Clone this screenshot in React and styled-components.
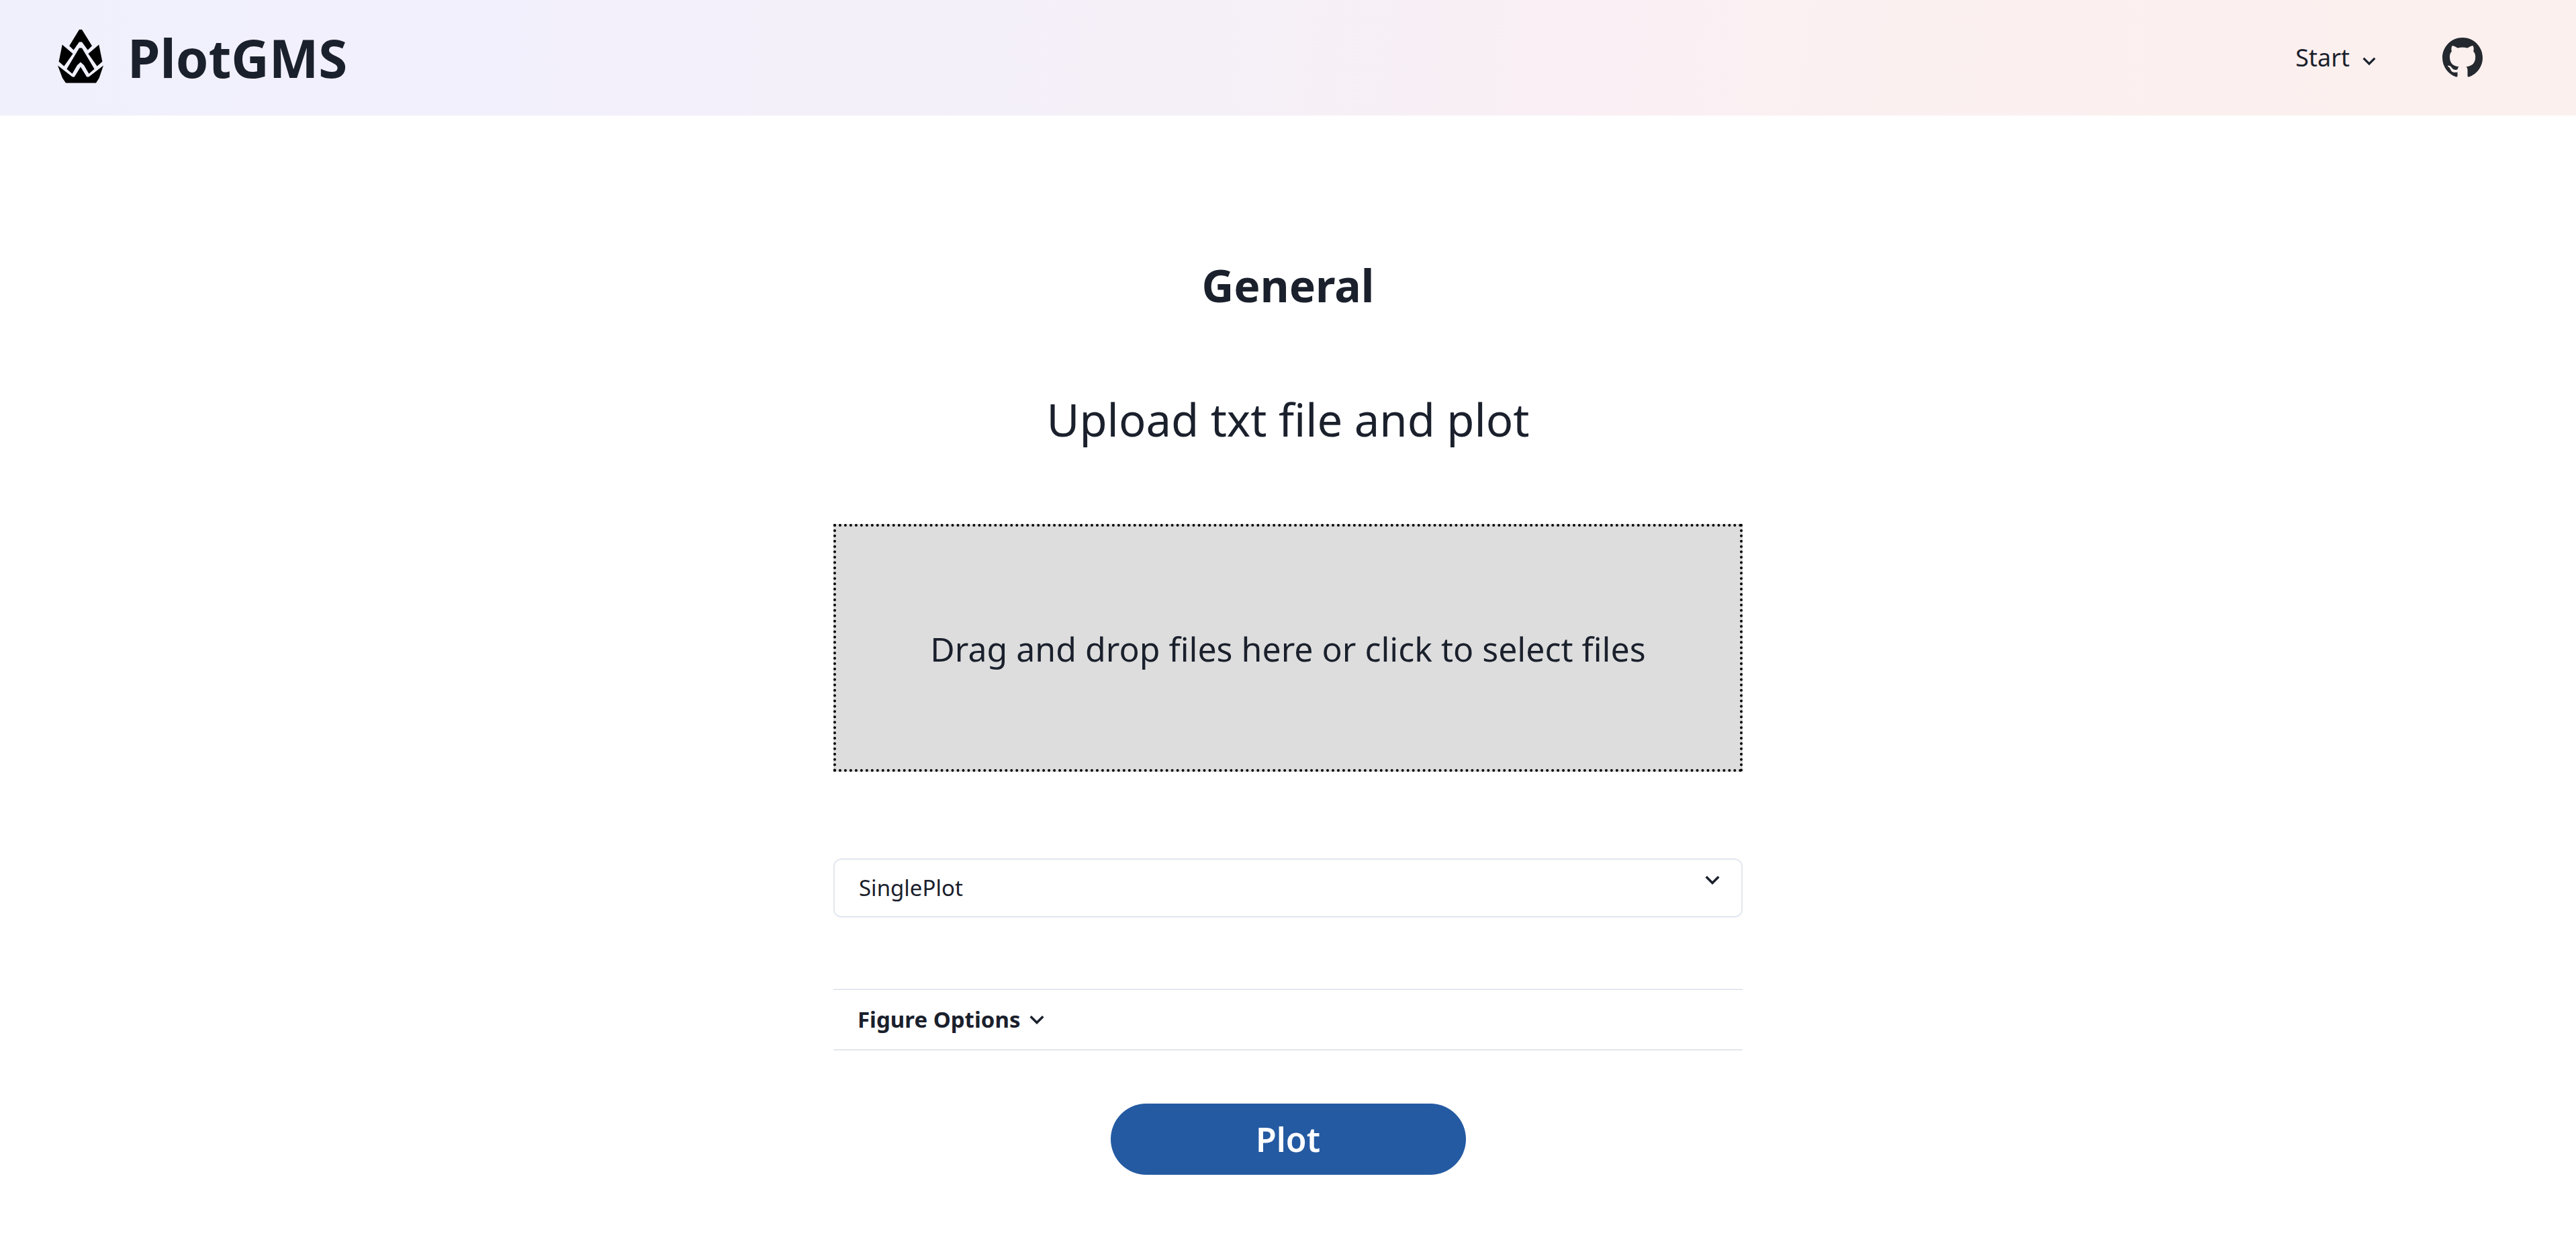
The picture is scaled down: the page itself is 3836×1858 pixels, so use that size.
import React from "react";
import styled, { createGlobalStyle } from "styled-components";
import { BsGithub } from "react-icons/bs";

const GlobalStyle = createGlobalStyle`
  *, *::before, *::after { box-sizing: border-box; }
  body {
    margin: 0;
    background: #ffffff;
    color: #1a202c;
    font-family: "Noto Sans", "Open Sans", sans-serif;
  }
  button, select, input { font: inherit; color: inherit; }
`;

const Header = styled.header`
  display: flex;
  align-items: center;
  justify-content: space-between;
  height: 172px;
  padding: 0 139px 0 86px;
  background: linear-gradient(95deg, #f0f0fd 0%, #f3f0fb 28%, #f6f0f7 50%, #faeff4 62%, #fbf0f0 74%, #fcf0ee 100%);
`;

const Brand = styled.a`
  display: flex;
  align-items: center;
  gap: 36px;
  color: inherit;
  font-size: 78px;
  font-weight: 700;
  line-height: 96px;
  text-decoration: none;
`;

const LogoMark = styled.svg`
  width: 68px;
  height: 84px;
  fill: #000000;
`;

const Nav = styled.nav`
  display: flex;
  align-items: center;
  gap: 90px;
`;

const MenuButton = styled.button`
  display: flex;
  align-items: flex-end;
  gap: 10px;
  padding: 0;
  border: 0;
  background: none;
  font-size: 36px;
  line-height: 48px;
  cursor: pointer;
`;

const GithubLink = styled.a`
  display: flex;
  color: #24292f;
  font-size: 60px;
`;

const ChevronIcon = styled.svg`
  flex: none;
  width: ${({ $size }) => $size}px;
  height: ${({ $size }) => $size}px;
  fill: currentColor;
`;

const Main = styled.main`
  display: flex;
  flex-direction: column;
  align-items: center;
  width: 100%;
  max-width: 1354px;
  margin: 0 auto;
  padding: 212px 0 108px;
`;

const Title = styled.h1`
  margin: 0;
  font-size: 66px;
  font-weight: 700;
  line-height: 80px;
`;

const Subtitle = styled.p`
  margin: 120px 0 0;
  font-size: 67px;
  line-height: 80px;
`;

const DropZone = styled.label`
  display: flex;
  align-items: center;
  justify-content: center;
  width: 100%;
  height: 369px;
  margin-top: 116px;
  padding-top: 2px;
  border: 4px dotted #000000;
  background: #dddddd;
  font-size: 50px;
  line-height: 60px;
  cursor: pointer;
`;

const HiddenFileInput = styled.input`
  position: absolute;
  width: 1px;
  height: 1px;
  opacity: 0;
`;

const SelectField = styled.div`
  position: relative;
  width: 100%;
  margin-top: 129px;
`;

const Select = styled.select`
  display: block;
  width: 100%;
  height: 88px;
  padding: 0 80px 0 36px;
  border: 2px solid #e2e8f0;
  border-radius: 12px;
  appearance: none;
  background: #ffffff;
  font-size: 33px;
  line-height: 48px;
`;

const SelectChevron = styled.span`
  position: absolute;
  top: 11px;
  right: 24px;
  display: flex;
  pointer-events: none;
`;

const Accordion = styled.section`
  width: 100%;
  margin-top: 106px;
  border-top: 2px solid #e2e8f0;
  border-bottom: 2px solid #e2e8f0;
`;

const AccordionButton = styled.button`
  display: flex;
  align-items: center;
  gap: 4px;
  width: 100%;
  height: 88px;
  padding: 0 36px;
  border: 0;
  background: none;
  font-size: 33px;
  font-weight: 700;
  line-height: 48px;
  cursor: pointer;
`;

const PlotButton = styled.button`
  width: 529px;
  height: 106px;
  margin-top: 79px;
  padding: 0;
  border: 0;
  border-radius: 53px;
  background: #245aa2;
  color: #ffffff;
  font-size: 50px;
  font-weight: 600;
  line-height: 60px;
  cursor: pointer;
`;

function Chevron({ size }) {
  return (
    <ChevronIcon $size={size} viewBox="0 0 24 24" aria-hidden="true">
      <path d="M16.59 8.59L12 13.17 7.41 8.59 6 10l6 6 6-6z" />
    </ChevronIcon>
  );
}

function Logo() {
  return (
    <LogoMark viewBox="0 0 68 84" aria-hidden="true">
      <path d="M32 0h4L51 24.3l-6.3 6.2L36 18.4h-4L23.6 30.5l-6.4-6.2z" />
      <path d="M6.7 22.6L22.6 36 9.4 54.4 1.6 47.7z" />
      <path d="M61.3 22.6L45.4 36l13.2 18.4 7.8-6.7z" />
      <path d="M32 27.4h4l18.6 31.3-8.2 7L39 53l-5-4.6-5 4.6-7.4 12.7-8.2-7z" />
      <path d="M0 53.4l21.8 17.2h3L34 55.4l9.2 15.2h3L68 53.4l-6.4 18.8-4.6 7.4H12l-5-7.4z" />
    </LogoMark>
  );
}

export default function App() {
  return (
    <>
      <GlobalStyle />
      <Header>
        <Brand href="#">
          <Logo />
          PlotGMS
        </Brand>
        <Nav>
          <MenuButton type="button" aria-haspopup="menu">
            Start
            <Chevron size={38} />
          </MenuButton>
          <GithubLink href="#" aria-label="GitHub">
            <BsGithub />
          </GithubLink>
        </Nav>
      </Header>
      <Main>
        <Title>General</Title>
        <Subtitle>Upload txt file and plot</Subtitle>
        <DropZone>
          <HiddenFileInput type="file" multiple />
          Drag and drop files here or click to select files
        </DropZone>
        <SelectField>
          <Select aria-label="Plot type" defaultValue="SinglePlot">
            <option value="SinglePlot">SinglePlot</option>
          </Select>
          <SelectChevron>
            <Chevron size={42} />
          </SelectChevron>
        </SelectField>
        <Accordion>
          <AccordionButton type="button" aria-expanded="false">
            Figure Options
            <Chevron size={42} />
          </AccordionButton>
        </Accordion>
        <PlotButton type="button">Plot</PlotButton>
      </Main>
    </>
  );
}
